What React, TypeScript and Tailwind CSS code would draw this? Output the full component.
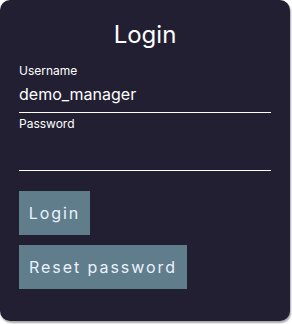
import React from "react";

export default function App() {
  return (
    <div className="w-[292px] h-[324px] bg-white" style={{ fontFamily: "Inter, 'Noto Sans', sans-serif" }}>
      <div className="w-[290px] h-[321px] rounded-[10px] bg-[#221f33] shadow-[1px_2px_2px_rgba(0,0,0,0.35)] px-[19px] pt-[20px] flex flex-col">
        <h1 className="text-center text-[24px] leading-[30px] text-white">Login</h1>
        <label className="mt-[13px] text-[12px] leading-[15px] text-white">Username</label>
        <div className="pt-[6px] pb-[8px] text-[16px] leading-[20px] text-white border-b border-white">demo_manager</div>
        <label className="mt-[3px] text-[12px] leading-[15px] text-white">Password</label>
        <div className="h-[40px] border-b border-white"></div>
        <div className="mt-[20px] flex flex-col items-start gap-[10px]">
          <button className="h-[44px] w-[71px] bg-[#607d8b] text-[#eaf2ff] text-[16px] tracking-[0.122em]">Login</button>
          <button className="h-[44px] w-[168px] bg-[#607d8b] text-[#eaf2ff] text-[16px] tracking-[0.122em]">Reset password</button>
        </div>
      </div>
    </div>
  );
}
